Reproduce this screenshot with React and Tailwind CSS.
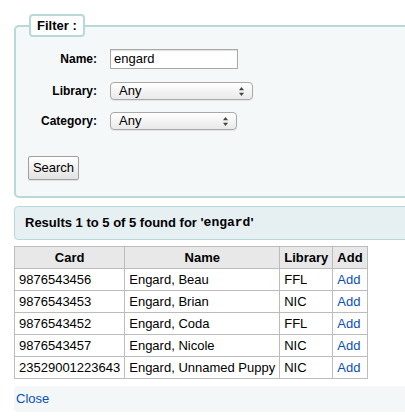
import React from "react";

function SelectBox({ width }) {
  return (
    <div
      className="relative flex h-[18px] items-center rounded-[4px] border border-[#a9a9a9] bg-gradient-to-b from-white to-[#e9e9e9] pl-[8px] text-[13px] text-black shadow-[0_1px_1px_rgba(0,0,0,0.08)]"
      style={{ width }}
    >
      <span>Any</span>
      <svg className="absolute right-[8px] top-[4px]" width="5" height="9" viewBox="0 0 5 9">
        <path d="M2.5 0 L5 3.2 L0 3.2 Z" fill="#444" />
        <path d="M2.5 9 L5 5.8 L0 5.8 Z" fill="#444" />
      </svg>
    </div>
  );
}

const rows = [
  ["9876543456", "Engard, Beau", "FFL"],
  ["9876543453", "Engard, Brian", "NIC"],
  ["9876543452", "Engard, Coda", "FFL"],
  ["9876543457", "Engard, Nicole", "NIC"],
  ["23529001223643", "Engard, Unnamed Puppy", "NIC"],
];

export default function App() {
  return (
    <div
      className="h-[417px] w-[405px] overflow-hidden bg-white pl-[14px] pt-[14px] text-black"
      style={{ fontFamily: '"Liberation Sans", Arial, sans-serif' }}
    >
      <fieldset className="w-[420px] rounded-[5px] border-2 border-[#b9d8d9] bg-[#f4f8f9] pb-[16px]">
        <legend className="ml-[13px] rounded-[4px] border-2 border-[#b9d8d9] bg-white px-[6px] text-[13px] font-bold leading-[19px]">
          Filter :
        </legend>
        <div className="mt-[12px] flex flex-col">
          <div className="flex h-[20px] items-center">
            <label className="w-[81px] pr-0 text-right text-[12px] font-bold">Name:</label>
            <div className="ml-[13px] flex h-[20px] w-[128px] items-center border border-[#a9a9a9] bg-white pl-[3px] text-[13px] shadow-[inset_0_1px_1px_rgba(0,0,0,0.12)]">
              engard
            </div>
          </div>
          <div className="mt-[13px] flex h-[18px] items-center">
            <label className="w-[81px] text-right text-[12px] font-bold">Library:</label>
            <div className="ml-[13px]">
              <SelectBox width={143} />
            </div>
          </div>
          <div className="mt-[12px] flex h-[18px] items-center">
            <label className="w-[81px] text-right text-[12px] font-bold">Category:</label>
            <div className="ml-[13px]">
              <SelectBox width={127} />
            </div>
          </div>
          <div className="ml-[12px] mt-[25px]">
            <button className="h-[24px] w-[51px] rounded-[2px] border border-[#a0a0a0] bg-gradient-to-b from-white to-[#e2e2e2] text-[13px] text-black shadow-[0_1px_1px_rgba(0,0,0,0.1)]">
              Search
            </button>
          </div>
        </div>
      </fieldset>

      <div className="mt-[8px] flex h-[34px] w-[420px] items-center rounded-[4px] border border-[#b9d8d9] bg-[#e6f0f2] pl-[10px] text-[13px] font-bold">
        Results 1 to 5 of 5 found for '
        <span style={{ fontFamily: '"Liberation Mono", "Courier New", monospace' }}>engard</span>'
      </div>

      <table className="mt-[6px] border-collapse text-[13px]">
        <thead>
          <tr className="h-[22px] bg-[#e8e8e8]">
            <th className="border border-[#bcbcbc] px-[4px] font-bold">Card</th>
            <th className="border border-[#bcbcbc] px-[4px] font-bold">Name</th>
            <th className="border border-[#bcbcbc] px-[4px] font-bold">Library</th>
            <th className="border border-[#bcbcbc] px-[4px] font-bold">Add</th>
          </tr>
        </thead>
        <tbody>
          {rows.map((r, i) => (
            <tr key={i} className="h-[22px]">
              <td className="border border-[#bcbcbc] bg-white px-[4px]">{r[0]}</td>
              <td className="border border-[#bcbcbc] bg-white px-[4px]">{r[1]}</td>
              <td className="border border-[#bcbcbc] bg-white px-[4px]">{r[2]}</td>
              <td className="border border-[#bcbcbc] bg-white px-[4px]">
                <a className="text-[#0b4fb5]" href="#">Add</a>
              </td>
            </tr>
          ))}
        </tbody>
      </table>

      <div className="mt-[7px] flex h-[26px] w-[420px] items-center rounded-[4px] bg-[#f3f7f8] pl-[2px] text-[13px]">
        <a className="text-[#0b4fb5]" href="#">Close</a>
      </div>
    </div>
  );
}
